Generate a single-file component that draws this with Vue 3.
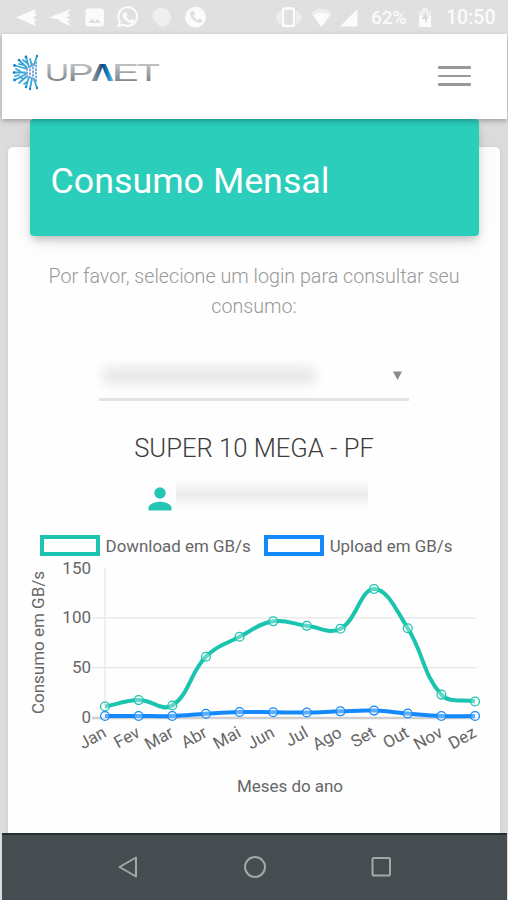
<script setup>
import { ref, computed } from 'vue'

const months = ['Jan', 'Fev', 'Mar', 'Abr', 'Mai', 'Jun', 'Jul', 'Ago', 'Set', 'Out', 'Nov', 'Dez']
const ticks = [150, 100, 50, 0]

const series = ref([
  {
    name: 'download',
    label: 'Download em GB/s',
    color: '#1bc4ae',
    data: [11, 17.5, 12, 61, 81, 96.5, 92, 89, 129, 89.5, 23, 16]
  },
  {
    name: 'upload',
    label: 'Upload em GB/s',
    color: '#1389fb',
    data: [1.5, 1.5, 1.5, 3.8, 5.5, 5.3, 5, 6.2, 6.9, 4, 1.5, 1.5]
  }
])

// plot area inside the svg
const area = { left: 77, right: 447, top: 38, bottom: 187.5 }

function px(i) {
  return area.left + (i * (area.right - area.left)) / (months.length - 1)
}

function py(value) {
  return area.bottom - (value / 150) * (area.bottom - area.top)
}

// smooth line, control points follow the distance to each neighbour
function smooth(points, tension = 0.4) {
  const ctrl = points.map((p, i) => {
    const prev = points[i - 1] || p
    const next = points[i + 1] || p
    const d1 = Math.hypot(p.x - prev.x, p.y - prev.y)
    const d2 = Math.hypot(next.x - p.x, next.y - p.y)
    const a = (tension * d1) / (d1 + d2)
    const b = (tension * d2) / (d1 + d2)
    return {
      in: { x: p.x - a * (next.x - prev.x), y: p.y - a * (next.y - prev.y) },
      out: { x: p.x + b * (next.x - prev.x), y: p.y + b * (next.y - prev.y) }
    }
  })
  let d = `M${points[0].x} ${points[0].y}`
  for (let i = 1; i < points.length; i++) {
    const c1 = ctrl[i - 1].out
    const c2 = ctrl[i].in
    d += ` C${c1.x} ${c1.y} ${c2.x} ${c2.y} ${points[i].x} ${points[i].y}`
  }
  return d
}

const lines = computed(() =>
  series.value.map((s) => {
    const points = s.data.map((v, i) => ({ x: px(i), y: py(v) }))
    return { ...s, points, path: smooth(points) }
  })
)
</script>

<template>
  <div class="phone">
    <div class="statusbar">
      <svg class="left-icons" width="184" height="34" viewBox="0 0 184 34" fill="#fbfbfb">
        <path d="M16 17.500 L36 9 L34 13 L37 14.500 L33 17.500 L37 20 L34 21 L36 26 Z" />
        <path d="M49 17.500 L71 9 L67 14 L71 14.500 L66 17.500 L71 20 L67 21 L71 26 L61 22 L59 19.500 Z" />
        <path fill-rule="evenodd" d="M88 8.500h13.500a2.500 2.500 0 0 1 2.500 2.500v13a2.500 2.500 0 0 1-2.500 2.500H88a2.500 2.500 0 0 1-2.500-2.500V11a2.500 2.500 0 0 1 2.500-2.500zM88 23h13l-3.500-4-2.500 2.500-3-3z" />
        <path d="M118.500 26l1.300-4.700a9.300 9.300 0 1 1 3.600 3.400z" fill="none" stroke="#fbfbfb" stroke-width="2.200" />
        <path d="M124 12.500l2-.5 1.500 3-1.300 1.500c1 2 2.300 3.200 4 4l1.600-1.500 2.700 1.500c0 2-1.500 2.800-3 2.700-4.500-.3-9-5-8.800-8.700 0-.8.500-1.600 1.300-2z" />
        <path d="M161.500 8a9 9 0 0 1 9.500 9c0 6-4 10-8.500 10-3 0-4-3-7-5.500-2-2-3.500-4-3-6.500.6-4 4.500-7 9-7z" opacity=".55" />
      </svg>
      <svg class="call-icon" width="24" height="34" viewBox="0 0 24 34">
        <circle cx="11.500" cy="17.200" r="10.400" fill="#fbfbfb" />
        <path d="M7 11.500l2.500-.7 1.500 3.400-1.400 1.600c1 2 2.200 3.200 4 4.200l1.700-1.500 3 1.500c-.1 2-1.500 3-3.200 2.800-4.500-.5-9-5-9-9.200 0-.8.300-1.600.9-2.100z" fill="#e0e0e0" />
      </svg>
      <svg class="right-icons" width="86" height="34" viewBox="0 0 86 34" fill="#fbfbfb">
        <rect x="8" y="8.500" width="11" height="17.500" rx="1.500" fill="none" stroke="#fbfbfb" stroke-width="2.400" />
        <path d="M5 11v12.500M2.500 14v6.500M22.500 11v12.500M25 14v6.500" stroke="#fbfbfb" stroke-width="2.400" opacity=".55" />
        <path d="M36 13c6-6 15-6 21 0L46.500 27z" opacity=".5" />
        <path d="M38 15c5-3 12-3 17 0l-8.500 12z" />
        <path d="M82.500 9v17.500H65z" />
      </svg>
      <span class="percent">62%</span>
      <svg class="battery" width="14" height="34" viewBox="0 0 14 34" fill="#fbfbfb">
        <path d="M4 8h6v3h3v7H1v-7h3z" opacity=".5" />
        <path d="M1 16h12v11H1z" />
        <path d="M8 12l-4.500 7H7v4.500l4-7H8z" fill="#d9d9d9" />
      </svg>
      <span class="clock">10:50</span>
    </div>

    <header class="navbar">
      <svg class="logo" width="154" height="44" viewBox="0 0 154 44">
        <defs>
          <linearGradient id="silver" x1="0" y1="0" x2="0" y2="1">
            <stop offset=".25" stop-color="#bcbec0" />
            <stop offset=".8" stop-color="#808489" />
          </linearGradient>
          <linearGradient id="blue" x1="0" y1="0" x2="1" y2="0">
            <stop offset="0" stop-color="#9aa0a5" />
            <stop offset=".35" stop-color="#546f88" />
            <stop offset=".5" stop-color="#0b4a80" />
            <stop offset=".75" stop-color="#1687c4" />
            <stop offset="1" stop-color="#7fc3e4" />
          </linearGradient>
        </defs>
        <g fill="none" stroke="#39a5d9" stroke-width="1.800" stroke-linecap="round">
          <path d="M18 18L6 14.500M16 21.500H5M17 23L6 29M18 25L10 32M20 26L17 36M23 27L21 38M18 17L10 9M20 16L17 6M23 15L21 8M25 14L28 5M25 28L28 37M14 14l-4-1M14 28l-3-2M11 20l-4-2M10 24l-4 1M18 12l-4-3M18 31l-3 2" />
          <path d="M27 11v21M24 13v17M21 15v13M18 18v8" stroke="#79a9dc" stroke-width="2" stroke-dasharray="1 2.600" />
        </g>
        <g fill="#1685c5">
          <circle cx="5.500" cy="14.500" r="1.400" /><circle cx="5" cy="21.500" r="1.300" /><circle cx="5.500" cy="29" r="1.400" />
          <circle cx="10" cy="9" r="1.300" /><circle cx="17" cy="6" r="1.400" /><circle cx="17" cy="36" r="1.300" />
          <circle cx="21" cy="38" r="1.200" /><circle cx="28" cy="5" r="1.200" /><circle cx="28" cy="37" r="1.200" />
        </g>
        <g class="wordmark" fill="url(#silver)">
          <text x="35.500" y="29.500" textLength="25" lengthAdjust="spacingAndGlyphs">U</text>
          <text x="58" y="29.500" textLength="27" lengthAdjust="spacingAndGlyphs">P</text>
          <text x="82" y="29.500" textLength="23" lengthAdjust="spacingAndGlyphs" class="accent" fill="url(#blue)">Λ</text>
          <text x="102" y="29.500" textLength="29" lengthAdjust="spacingAndGlyphs">E</text>
          <text x="127" y="29.500" textLength="25" lengthAdjust="spacingAndGlyphs">T</text>
        </g>
      </svg>
      <button class="menu" aria-label="Menu">
        <span></span>
        <span></span>
        <span></span>
      </button>
    </header>

    <main class="content">
      <section class="card">
        <div class="card-header">
          <h1>Consumo Mensal</h1>
        </div>
        <p class="hint">Por favor, selecione um login para consultar seu consumo:</p>

        <div class="select">
          <span class="hidden-login"></span>
          <svg width="9" height="9" viewBox="0 0 9 9"><path d="M0 .5h9L4.500 9z" fill="#8a8a8a" /></svg>
        </div>

        <h2>SUPER 10 MEGA - PF</h2>
        <div class="user">
          <svg width="24" height="24" viewBox="0 0 24 24" fill="#26c6b4">
            <circle cx="12" cy="6" r="5.700" />
            <path d="M.5 23.500v-2.700c0-4 7.500-6 11.500-6s11.500 2 11.500 6v2.700z" />
          </svg>
          <span class="hidden-user"></span>
        </div>

        <div class="legend">
          <div v-for="s in series" :key="s.name" class="legend-item">
            <span class="box" :class="s.name"></span>
            <span>{{ s.label }}</span>
          </div>
        </div>

        <svg class="chart" width="452" height="272" viewBox="0 0 452 272">
          <g fill="none" stroke="#e6e6e6" stroke-width="1.200">
            <line v-for="t in [100, 50]" :key="t" :x1="area.left - 13" :x2="area.right + 1" :y1="py(t)" :y2="py(t)" />
            <line :x1="area.left" :x2="area.left" :y1="area.top" :y2="area.bottom + 1" />
            <line class="zero" :x1="area.left - 13" :x2="area.right + 1" :y1="area.bottom + 0.5" :y2="area.bottom + 0.5" />
          </g>
          <text v-for="t in ticks" :key="t" class="tick" :x="area.left - 14" :y="py(t) + 5.500">{{ t }}</text>
          <text class="axis" textLength="143" transform="translate(16 184) rotate(-90)">Consumo em GB/s</text>
          <text
            v-for="(m, i) in months"
            :key="m"
            class="month"
            :transform="`translate(${px(i) + 2.500} ${area.bottom + 18.500}) rotate(-29)`"
          >{{ m }}</text>
          <text class="axis" x="209" y="262" textLength="106">Meses do ano</text>

          <g v-for="l in lines" :key="l.name" fill="none" :stroke="l.color">
            <path :d="l.path" stroke-width="4" />
            <circle v-for="(p, i) in l.points" :key="i" :cx="p.x" :cy="p.y" r="4.400" class="dot" />
          </g>
        </svg>
      </section>
    </main>

    <nav class="softkeys">
      <svg width="24" height="24" viewBox="0 0 24 24"><path d="M19 2.500v19L2.500 12z" /></svg>
      <svg width="24" height="24" viewBox="0 0 24 24"><circle cx="12" cy="12" r="10" /></svg>
      <svg width="24" height="24" viewBox="0 0 24 24"><rect x="3.500" y="3" width="17.500" height="17.500" rx="1" /></svg>
    </nav>
  </div>
</template>

<style>
body {
  margin: 0;
  background: #dcdcdc;
}
</style>

<style scoped>
.phone {
  box-sizing: border-box;
  width: 508px;
  height: 900px;
  display: flex;
  flex-direction: column;
  overflow: hidden;
  background: #dcdcdc;
  font-family: Roboto, "Liberation Sans", sans-serif;
}

.statusbar {
  display: flex;
  align-items: center;
  height: 34px;
  flex: none;
  background: #e0e0e0;
  color: #fbfbfb;
  font-size: 19px;
  font-weight: 500;
}

.left-icons,
.call-icon {
  flex: none;
}

.right-icons {
  margin-left: 67px;
}

.percent {
  margin-left: 10px;
  width: 38px;
  font-size: 19px;
}

.battery {
  margin-left: 9px;
}

.clock {
  margin-left: 14px;
  font-size: 19.500px;
}

.navbar {
  position: relative;
  z-index: 2;
  box-sizing: border-box;
  display: flex;
  flex: none;
  align-items: flex-start;
  justify-content: space-between;
  height: 85px;
  margin: 0 1px 0 2px;
  padding: 17px 36px 0 7px;
  background: #fff;
  box-shadow: 0 2px 5px rgba(0, 0, 0, 0.28);
}

.wordmark text {
  font-family: Inter, Roboto, sans-serif;
  font-size: 23px;
  font-weight: 400;
}

.wordmark .accent {
  font-weight: 700;
}

.menu {
  display: flex;
  flex-direction: column;
  gap: 6px;
  margin-top: 15px;
  padding: 0;
  border: 0;
  background: none;
}

.menu span {
  width: 33px;
  height: 2.500px;
  border-radius: 1px;
  background: #999;
}

.content {
  flex: 1;
  min-height: 0;
  padding: 28px 8px 0;
}

.card {
  display: flex;
  flex-direction: column;
  align-items: center;
  height: 686px;
  border-radius: 5px 5px 0 0;
  background: #fefefe;
  box-shadow: 0 1px 4px rgba(0, 0, 0, 0.1);
}

.card-header {
  box-sizing: border-box;
  flex: none;
  width: 449px;
  height: 117px;
  margin-top: -28px;
  padding: 40px 21px 0;
  border-radius: 4px;
  background: #2bcdbb;
  box-shadow: 0 5px 10px -2px rgba(0, 0, 0, 0.25), 0 8px 24px rgba(0, 0, 0, 0.05);
}

h1 {
  margin: 0;
  color: #fff;
  font-size: 35.800px;
  font-weight: 400;
  line-height: 44px;
}

.hint {
  flex: none;
  width: 440px;
  margin: 26px 0 0;
  color: #999;
  font-size: 19.700px;
  font-weight: 300;
  line-height: 30px;
  text-align: center;
}

.select {
  box-sizing: border-box;
  display: flex;
  flex: none;
  align-items: center;
  justify-content: space-between;
  width: 310px;
  height: 49px;
  margin-top: 30px;
  padding: 0 7px 0 4px;
  border-bottom: 3px solid #e3e3e3;
}

.hidden-login {
  width: 212px;
  height: 15px;
  border-radius: 5px;
  background: #e4e4e4;
  filter: blur(6px);
}

h2 {
  flex: none;
  margin: 30px 0 0;
  color: #3c3c3c;
  font-size: 25.600px;
  font-weight: 300;
  line-height: 34px;
}

.user {
  display: flex;
  flex: none;
  align-items: flex-end;
  gap: 4px;
  width: 220px;
  height: 31px;
  margin-top: 15px;
  margin-left: 8px;
}

.hidden-user {
  width: 192px;
  height: 30px;
  margin-bottom: 3px;
  background: linear-gradient(#fefefe, #f2f2f2 40%, #ececec 55%, #fdfdfd);
}

.legend {
  display: flex;
  flex: none;
  gap: 13px;
  margin-top: 24px;
  margin-right: 16px;
  color: #666;
  font-size: 16.900px;
  line-height: 20px;
}

.legend-item {
  display: flex;
  align-items: center;
  gap: 6px;
  white-space: nowrap;
}

.box {
  box-sizing: border-box;
  width: 60px;
  height: 21px;
  border: 4px solid;
}

.download {
  border-color: #1bc4ae;
}

.upload {
  border-color: #1389fb;
}

.chart {
  flex: none;
  margin-top: -26px;
}

.chart text {
  fill: #666;
  font-size: 17px;
}

.chart .tick,
.chart .month {
  text-anchor: end;
}

.zero {
  stroke: #cfcfcf;
  stroke-width: 2.500;
}

.dot {
  fill: rgba(255, 255, 255, 0.3);
  stroke-width: 1.300;
}

.softkeys {
  position: relative;
  z-index: 1;
  box-sizing: border-box;
  display: flex;
  flex: none;
  justify-content: center;
  gap: 102px;
  height: 67px;
  margin: 0 1px 0 2px;
  padding-top: 20px;
  border-top: 2px solid #253032;
  background: #464d51;
}

.softkeys svg {
  fill: none;
  stroke: #a2a8aa;
  stroke-width: 2;
  stroke-linejoin: round;
}
</style>
